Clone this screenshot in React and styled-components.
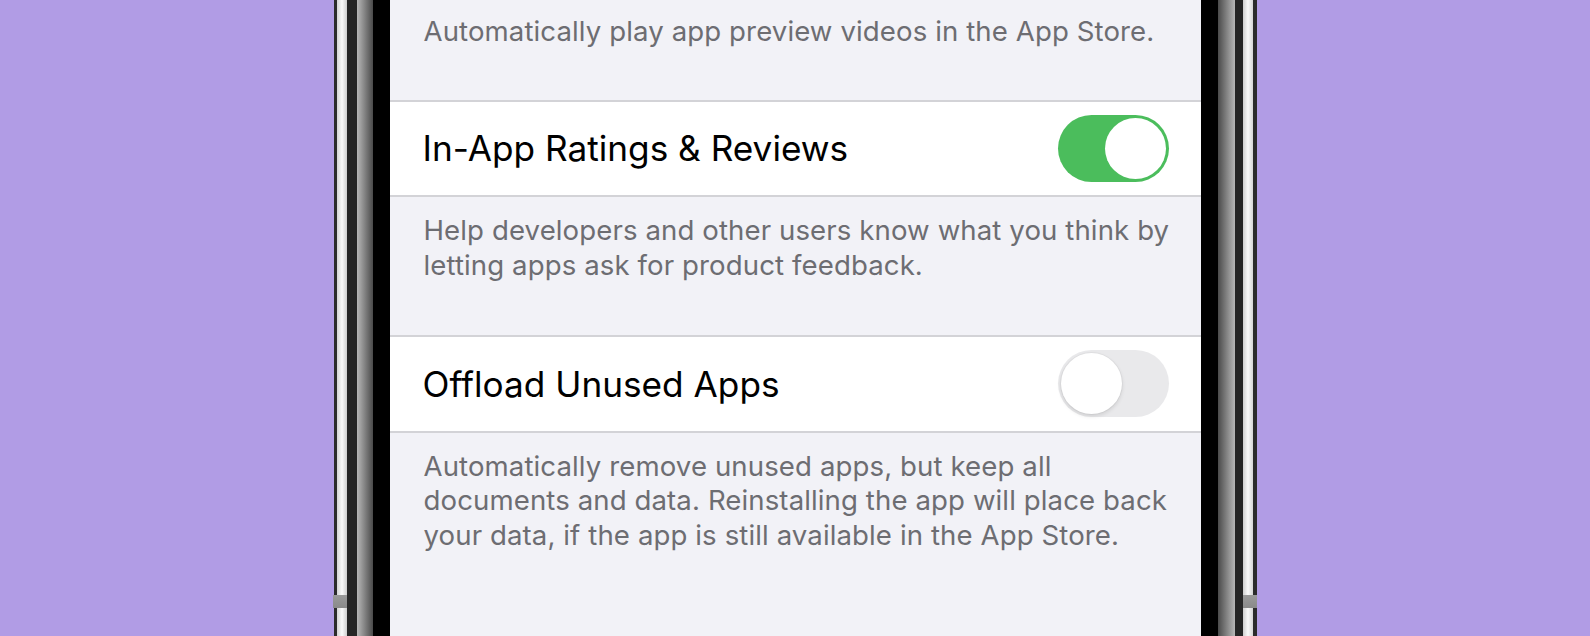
import React from "react";
import styled, { createGlobalStyle } from "styled-components";

const Global = createGlobalStyle`
  html, body { margin: 0; padding: 0; }
  body {
    background: #b19ce5;
    overflow: hidden;
    font-family: Inter, "Liberation Sans", "Noto Sans", sans-serif;
  }
`;

const Page = styled.div`
  width: 1590px;
  height: 636px;
  display: flex;
  justify-content: center;
  background: #b19ce5;
  overflow: hidden;
`;

const Phone = styled.div`
  position: relative;
  width: 923px;
  height: 636px;
  box-sizing: border-box;
  padding: 0 56px;
  display: flex;
  background: linear-gradient(
    to right,
    #2b2b2b 0px, #2b2b2b 3px,
    #d4d4d4 3px, #fbfbfb 8px, #cfcfcf 13px,
    #262626 13px, #262626 23px,
    #b8b8b8 23px, #4a4a4a 39px,
    #000 39px, #000 884px,
    #4a4a4a 884px, #b8b8b8 901px,
    #262626 901px, #262626 909px,
    #cfcfcf 909px, #fbfbfb 914px, #d4d4d4 919px,
    #2b2b2b 919px, #2b2b2b 923px
  );
`;

const SideButton = styled.div`
  position: absolute;
  top: 595px;
  ${(p) => (p.$side === "left" ? "left: -1px;" : "right: 0px;")}
  width: 14px;
  height: 13px;
  background: linear-gradient(to bottom, #9a9a9a, #8a8a8a);
`;

const Screen = styled.div`
  flex: 1;
  background: #f2f2f7;
  display: flex;
  flex-direction: column;
  overflow: hidden;
`;

const Footer = styled.p`
  flex-shrink: 0;
  margin: 0;
  padding: ${(p) => p.$pad};
  color: #6d6d72;
  font-size: 27.6px;
  line-height: 34.5px;
  letter-spacing: 0.1px;
  white-space: nowrap;
`;

const Row = styled.div`
  flex-shrink: 0;
  height: 93.5px;
  background: #fff;
  border-top: 2px solid #d3d3d7;
  border-bottom: 2px solid #d3d3d7;
  display: flex;
  align-items: center;
  justify-content: space-between;
  padding: 0 32px 0 33px;
`;

const Title = styled.span`
  font-size: 35.2px;
  color: #000;
`;

const Track = styled.div`
  width: 111px;
  height: 67px;
  border-radius: 34px;
  box-sizing: border-box;
  padding: 3px;
  display: flex;
  justify-content: ${(p) => (p.$on ? "flex-end" : "flex-start")};
  background: ${(p) => (p.$on ? "#4bbd5c" : "#e9e9eb")};
`;

const Knob = styled.div`
  width: 61px;
  height: 61px;
  border-radius: 50%;
  background: #fff;
  box-shadow: ${(p) =>
    p.$on ? "none" : "0 2px 4px rgba(0,0,0,0.12), 0 0 0 1px rgba(0,0,0,0.03)"};
`;

const Toggle = ({ on }) => (
  <Track $on={on}>
    <Knob $on={on} />
  </Track>
);

export default function App() {
  return (
    <Page>
      <Global />
      <Phone>
        <SideButton $side="left" />
        <SideButton $side="right" />
        <Screen>
          <Footer $pad="14px 34px 51px">
            Automatically play app preview videos in the App Store.
          </Footer>
          <Row>
            <Title>In-App Ratings &amp; Reviews</Title>
            <Toggle on />
          </Row>
          <Footer $pad="16px 34px 53px">
            Help developers and other users know what you think by
            <br />
            letting apps ask for product feedback.
          </Footer>
          <Row>
            <Title>Offload Unused Apps</Title>
            <Toggle on={false} />
          </Row>
          <Footer $pad="16px 34px 40px">
            Automatically remove unused apps, but keep all
            <br />
            documents and data. Reinstalling the app will place back
            <br />
            your data, if the app is still available in the App Store.
          </Footer>
        </Screen>
      </Phone>
    </Page>
  );
}
